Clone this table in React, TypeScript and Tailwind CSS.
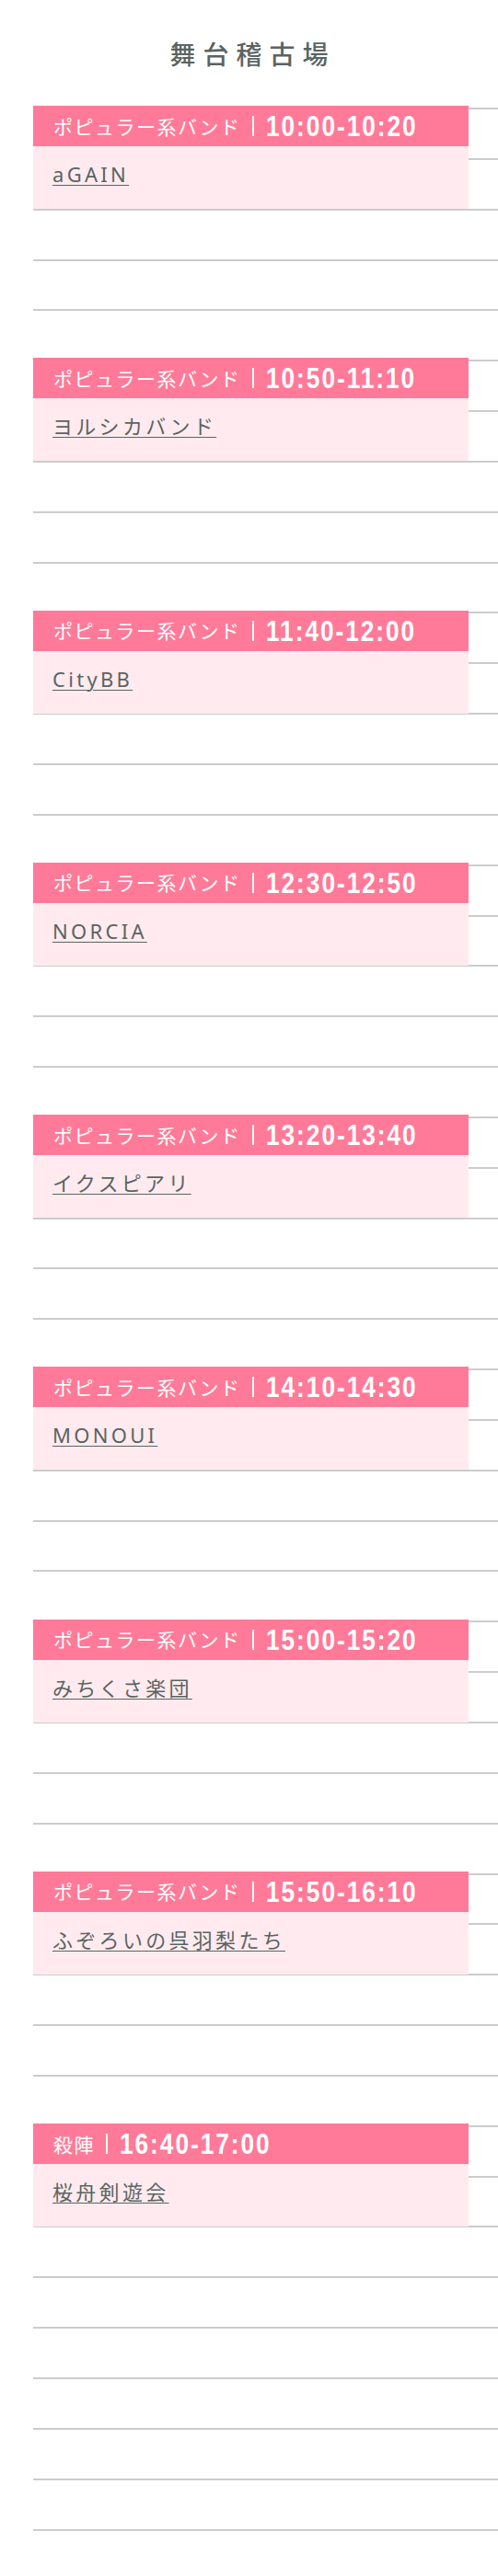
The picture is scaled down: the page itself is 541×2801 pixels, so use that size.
const ROW = 54.85;

type Slot = { slot: number; genre: string; time: string; name: string };

const slots: Slot[] = [
  { slot: 0, genre: "ポピュラー系バンド", time: "10:00-10:20", name: "aGAIN" },
  { slot: 5, genre: "ポピュラー系バンド", time: "10:50-11:10", name: "ヨルシカバンド" },
  { slot: 10, genre: "ポピュラー系バンド", time: "11:40-12:00", name: "CityBB" },
  { slot: 15, genre: "ポピュラー系バンド", time: "12:30-12:50", name: "NORCIA" },
  { slot: 20, genre: "ポピュラー系バンド", time: "13:20-13:40", name: "イクスピアリ" },
  { slot: 25, genre: "ポピュラー系バンド", time: "14:10-14:30", name: "MONOUI" },
  { slot: 30, genre: "ポピュラー系バンド", time: "15:00-15:20", name: "みちくさ楽団" },
  { slot: 35, genre: "ポピュラー系バンド", time: "15:50-16:10", name: "ふぞろいの呉羽梨たち" },
  { slot: 40, genre: "殺陣", time: "16:40-17:00", name: "桜舟剣遊会" },
];

function Card({ item }: { item: Slot }) {
  return (
    <div
      className="absolute left-0 w-[473px] h-[112px] flex flex-col"
      style={{ top: item.slot * ROW - 2 }}
    >
      <div className="h-[44px] bg-[#ff7a98] flex items-center pl-[22px] text-white whitespace-nowrap overflow-hidden">
        <span className="text-[21px] leading-none tracking-[1.5px] font-['Noto_Sans_CJK_JP',sans-serif]">
          {item.genre}
        </span>
        <span className="ml-[12px] w-[2px] h-[22px] bg-white shrink-0" />
        {/* condensed numerals */}
        <span className="ml-[13px] inline-block origin-left scale-x-[0.82] text-[32px] leading-none font-bold tracking-[2.4px] font-['Liberation_Sans',Arial,sans-serif]">
          {item.time}
        </span>
      </div>
      <div className="flex-1 bg-[#ffebef] pl-[21px] pt-[14px]">
        <a
          href="#"
          className="text-[22px] leading-[33px] tracking-[0.15em] text-[#5a6462] underline underline-offset-[3px] decoration-1 font-['Noto_Sans','Noto_Sans_CJK_JP',sans-serif]"
        >
          {item.name}
        </a>
      </div>
    </div>
  );
}

export default function App() {
  return (
    <div className="bg-white w-[541px] overflow-hidden pt-[36px] pb-[49px]">
      <h2 className="text-center text-[28px] leading-[45px] font-medium tracking-[8px] pl-[8px] text-[#5a6462] font-['Noto_Sans_CJK_JP',sans-serif]">
        舞台稽古場
      </h2>

      {/* timetable: 10 minute rows, 10:00 - 18:00 */}
      <div className="relative ml-[36px] mt-[36px] border-b-2 border-[#cccccc]">
        {Array.from({ length: 48 }).map((_, i) => (
          <div key={i} className="h-[54.85px] border-t-2 border-[#cccccc]" />
        ))}
        {slots.map((s) => (
          <Card key={s.slot} item={s} />
        ))}
      </div>
    </div>
  );
}
